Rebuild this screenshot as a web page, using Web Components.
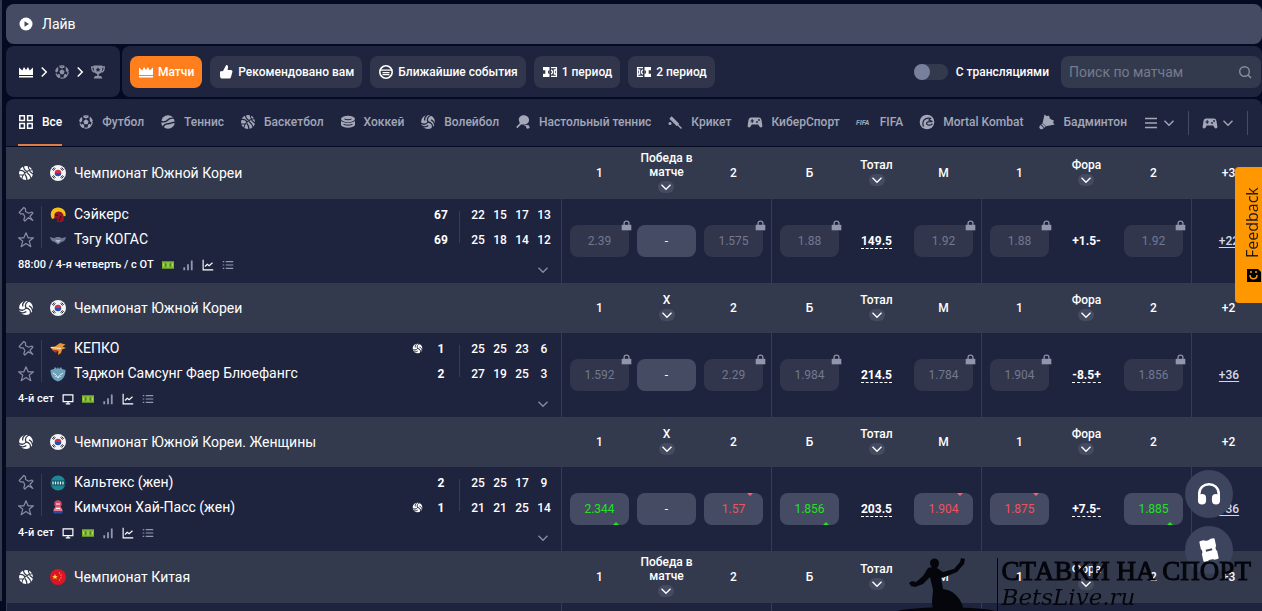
<!DOCTYPE html>
<html lang="ru">
<head>
<meta charset="utf-8">
<meta name="viewport" content="width=device-width, initial-scale=1">
<title>Лайв</title>
<style>
  :root {
    --bg: #040a22;
    --panel: #1f243e;
    --head: #343a4d;
    --raised: #444b63;
    --chip: #31364c;
    --muted: #a3a7b8;
    --dim: #737890;
    --line: #363b54;
    --orange: #ff7f1e;
    --green: #22e01f;
    --red: #f0525f;
  }
  body {
    margin: 0;
    background: var(--bg);
    color: #fff;
    font: 400 12px/16px Roboto, "Liberation Sans", sans-serif;
  }
</style>
</head>
<body>
<live-page>
  <page-title slot="top" icon="play">Лайв</page-title>
  <filter-bar slot="top">
    <filter-chip icon="crown" active>Матчи</filter-chip>
    <filter-chip icon="thumb">Рекомендовано вам</filter-chip>
    <filter-chip icon="events">Ближайшие события</filter-chip>
    <filter-chip icon="half1">1 период</filter-chip>
    <filter-chip icon="half2">2 период</filter-chip>
  </filter-bar>
  <sports-nav slot="top">
    <sport-tab icon="grid" active>Все</sport-tab>
    <sport-tab icon="football">Футбол</sport-tab>
    <sport-tab icon="tennis">Теннис</sport-tab>
    <sport-tab icon="basketball">Баскетбол</sport-tab>
    <sport-tab icon="hockey">Хоккей</sport-tab>
    <sport-tab icon="volleyball">Волейбол</sport-tab>
    <sport-tab icon="tabletennis">Настольный теннис</sport-tab>
    <sport-tab icon="cricket">Крикет</sport-tab>
    <sport-tab icon="gamepad">КиберСпорт</sport-tab>
    <sport-tab icon="fifa">FIFA</sport-tab>
    <sport-tab icon="dragon">Mortal Kombat</sport-tab>
    <sport-tab icon="shuttle">Бадминтон</sport-tab>
  </sports-nav>
  <live-board></live-board>
  <round-button slot="float" icon="headset" label="Поддержка"></round-button>
  <round-button slot="float" icon="ticket" label="Купон"></round-button>
</live-page>
<feedback-tab>Feedback</feedback-tab>
<site-mark><span slot="name">СТАВКИ НА СПОРТ</span>BetsLive.ru</site-mark>

<script>
const SWIRL = "M8 8C6.500 5 8 2 11.500 1M4.700 6.500C4.300 4 5.500 2 7.500 .6";

// Icon markup, all drawn on a 16x16 grid.
// --cut is the colour behind the icon, used for seams.
const ICONS = {
  play: `<circle cx="8" cy="8" r="6.500" fill="currentColor"/><path d="M6.500 5.200v5.600L11 8z" fill="var(--cut)"/>`,
  crown: `<path fill="currentColor" d="M1 3.500l3.300 3L6 3l2 3 2-3 1.700 3.500L15 3.500V11H1zM1 12h14v1.500H1z"/>`,
  chevronRight: `<path d="M5 2l6 6-6 6" fill="none" stroke="currentColor" stroke-width="2"/>`,
  chevronDown: `<path d="M2 5l6 6 6-6" fill="none" stroke="currentColor" stroke-width="1.800"/>`,
  football: `<circle cx="8" cy="8" r="6.200" fill="none" stroke="currentColor" stroke-width="1.200" stroke-dasharray="4.500 2"/><g fill="currentColor"><path d="M8 5.300l2.600 1.900-1 3H6.400l-1-3z"/><path d="M5.500 1.500L8 3l2.500-1.500v2L8 4.500l-2.500-1zM1.500 6l2-2 1 .5-.5 2.800-2 1.400zM14.500 6l-2-2-1 .5.500 2.800 2 1.400zM3 12.500l.8-2.700 2 .7.700 2.700-1.500 1zM13 12.500l-.8-2.700-2 .7-.7 2.700 1.500 1z"/></g>`,
  trophy: `<path fill="none" stroke="currentColor" stroke-width="1.300" d="M4 3H1.700c0 3 1 4.700 3 5.200M12 3h2.300c0 3-1 4.700-3 5.200"/><path fill="currentColor" d="M3.700 1.500h8.600v3.800c0 2.700-1.600 4.300-3.500 4.600V12H11l1.500 2.500h-9L5 12h2.200V9.900C5.300 9.600 3.700 8 3.700 5.300z"/><path fill="var(--cut)" d="M8 3.200l.8 1.500 1.600.2-1.200 1.200.3 1.700L8 7l-1.500.8.3-1.700-1.200-1.200 1.600-.2z"/>`,
  thumb: `<path fill="currentColor" d="M2 7.500l3-.5L8.200 1c2 0 2.300 1.500 1.400 5h3.200c1.500 0 1.900 1 1.500 2.300l-1.400 4.900c-.3.900-.9 1.300-1.700 1.300H3.500C2.500 14.500 2 13 2 11z"/>`,
  events: `<circle cx="8" cy="8" r="6.200" fill="none" stroke="currentColor" stroke-width="1.600"/><path d="M1.500 6.200h13M4.500 8.700h7M4.500 10.700h7" stroke="currentColor" stroke-width="1.300"/>`,
  half1: `<path d="M1 3h6.500v10H1z" fill="currentColor"/><path d="M9 3.700h5.400v8.600H9M14.400 6h-2v4h2M9 6c2 .5 2 3.500 0 4" fill="none" stroke="currentColor" stroke-width="1.300"/><path d="M1 6.200h2.300v3.600H1M7.500 6c-2 0-2 4 0 4z" fill="var(--cut)"/>`,
  half2: `<path d="M8.500 3H15v10H8.500z" fill="currentColor"/><path d="M7 3.700H1.600v8.600H7M1.600 6h2v4h-2M7 6c-2 .5-2 3.500 0 4" fill="none" stroke="currentColor" stroke-width="1.300"/><path d="M15 6.200h-2.300v3.600H15M8.500 6c2 0 2 4 0 4z" fill="var(--cut)"/>`,
  search: `<circle cx="7.500" cy="7.500" r="4.800" fill="none" stroke="currentColor" stroke-width="1.400"/><path d="M11 11l3 3" stroke="currentColor" stroke-width="1.600"/>`,
  grid: `<path d="M1.800 1.800h4.600v4.600H1.800zM9.600 1.800h4.600v4.600H9.600zM1.800 9.600h4.600v4.600H1.800zM9.600 9.600h4.600v4.600H9.600z" fill="none" stroke="currentColor" stroke-width="1.500"/>`,
  tennis: `<circle cx="8" cy="8" r="6.800" fill="currentColor"/><path d="M1 7.500c4 1 5.500.2 6.800-1.500S11 3.500 15.500 4.500M3 14c.5-2.700 2-4 5-4.200 3.500-.2 4-1.600 7-1.600" fill="none" stroke="var(--cut)" stroke-width="1.400"/>`,
  basketball: `<circle cx="8" cy="8" r="7" fill="currentColor"/><path d="M3.500 14.500C4.500 9 9 5 15 4.500M1 5.500c3-.5 5 .5 6 2.500M5.500 1c0 2.500 1 4.500 4 5.500M10.500 1c-.5 1.500 0 3 1.500 4.500M1 10h5M9 7.500c2 1.500 3.500 3.500 4 6M7 9.500c1.300 1.500 2 3.500 2 6M11.500 6.200L15 9" fill="none" stroke="var(--cut)" stroke-width="1.200"/>`,
  hockey: `<ellipse cx="8" cy="5" rx="7" ry="3.300" fill="currentColor"/><path fill="currentColor" d="M1 7c2.500 2.400 11.500 2.400 14 0v4.300c-2 3.200-12 3.200-14 0z"/><path d="M4.500 5c1.500 1 5.500 1 7 0M3.500 10.300c3 1.200 6 1.200 9 0" fill="none" stroke="var(--cut)"/>`,
  volleyball: `<circle cx="8" cy="8" r="7" fill="currentColor"/><g fill="none" stroke="var(--cut)" stroke-width="1.300"><path d="${SWIRL}"/><path d="${SWIRL}" transform="rotate(120 8 8)"/><path d="${SWIRL}" transform="rotate(240 8 8)"/></g>`,
  tabletennis: `<path fill="currentColor" d="M4.200 7.500C2.700 3.500 6 1 9.200 1.300c3.500.3 5.600 3.200 4.700 6-.5 1.500-1.500 2.500-3.300 3.200L6 10.600 2.400 14.300 1.200 13l3.600-3.700zM8.500 11l5 .3 1.300 3z"/><circle cx="12.700" cy="13" r="1.700" fill="currentColor"/>`,
  cricket: `<path d="M3.500 3.500l7.500 7.500" stroke="currentColor" stroke-width="3.200"/><path d="M10.500 10.500L14.500 14.500" stroke="currentColor" stroke-width="1.500"/><circle cx="3" cy="9.500" r="1.500" fill="currentColor"/>`,
  gamepad: `<path fill="currentColor" d="M4 3.500h8c1.500 0 2.200 1 2.600 3l.8 5.500c0 1.500-2 2-3 .5l-1.200-2H4.800l-1.200 2c-1 1.500-3 1-3-.5l.8-5.500c.4-2 1.100-3 2.600-3z"/><path d="M3.500 7h3.400M5.200 5.300v3.400" stroke="var(--cut)" stroke-width="1.200"/><circle cx="10" cy="8" r=".9" fill="var(--cut)"/><circle cx="12" cy="6" r=".9" fill="var(--cut)"/>`,
  fifa: `<text x="0" y="11" font-family="Roboto" font-size="7" font-weight="700" font-style="italic" fill="currentColor">FIFA</text>`,
  dragon: `<circle cx="8" cy="8" r="7.300" fill="currentColor"/><path d="M4.500 12.500C2.500 7 6 3 11.500 4.300L10 6l3.500 1.500-4 .3C7 8 7 10.500 9 11s3.500 0 4.500-1.300" fill="none" stroke="var(--cut)" stroke-width="1.200"/>`,
  shuttle: `<path fill="currentColor" d="M5.500.5L7.500 2 10 1.800l1 3 4 2-1 2 1.700 1.700L7 12.300 3.600 9z"/><path d="M2.800 9.800l3.300 3.300" stroke="currentColor" stroke-width="1.500"/><path fill="currentColor" d="M1.700 11l3 3c-1 1.500-2.500 1.700-3.700.7s-.7-2.700.7-3.700z"/>`,
  menu: `<path d="M2 3.500h12M2 8h12M2 12.500h12" stroke="currentColor" stroke-width="1.500"/>`,
  pin: `<path d="M1.200 6.500L5.800 1.500l1.700 1.300v2.700l3.200 1.700 3-1.200 1.200 1-3 3.500 3 4-4.500-2.800L6.800 15l-1-1.200 1-3-1.500-3H2.500z" fill="none" stroke="currentColor" stroke-width="1.200" stroke-linejoin="round"/>`,
  star: `<path d="M8 .8l2.100 5h5.400l-4.300 3.400 1.600 5.500L8 11.500l-4.800 3.200 1.600-5.500L.5 5.800h5.400z" fill="none" stroke="currentColor" stroke-width="1.200" stroke-linejoin="round"/>`,
  lock: `<path d="M4.500 8V4.500c0-4 7-4 7 0V8" fill="none" stroke="currentColor" stroke-width="1.800"/><path d="M1 7h14v8H1z" fill="currentColor"/>`,
  tv: `<path d="M1.500 2.500h13v9h-13zM5 14.500h6M8 12v2" fill="none" stroke="currentColor" stroke-width="1.600"/>`,
  pitch: `<path d="M0 3h16v10H0z" fill="#7cb52c"/><path d="M5 6v4M11 6v4" stroke="#3f6b1c" stroke-width="1.300"/><path d="M8 5v6M2 6v4M14 6v4" stroke="#b4dc6a" stroke-width="1.300"/>`,
  bars: `<path d="M3 15v-4M8 15V7M13 15V2" stroke="currentColor" stroke-width="2.400"/>`,
  chart: `<path d="M1.500 1v13.500H15M4 10l3-3 2.500 2L14 5" fill="none" stroke="currentColor" stroke-width="1.500"/>`,
  list: `<path d="M5 3.500h10M5 8h10M5 12.500h10M1 3.500h2M1 8h2M1 12.500h2" stroke="currentColor" stroke-width="1.600"/>`,
  headset: `<path d="M2 10.500V8c0-8 12-8 12 0v2.500" fill="none" stroke="currentColor" stroke-width="1.500"/><rect x="1.200" y="8" width="5" height="6.500" rx="2.500" fill="currentColor"/><rect x="9.800" y="8" width="5" height="6.500" rx="2.500" fill="currentColor"/>`,
  ticket: `<g transform="rotate(-12 8 8)"><path fill="currentColor" d="M4 1.500h2c.6.800 3.400.8 4 0h2c.5 0 .8.300.8.800v4.200c-.8.500-.8 2.500 0 3v4.200c0 .5-.3.800-.8.800h-2c-.6-.8-3.400-.8-4 0H4c-.5 0-.8-.3-.8-.8V9.500c.8-.5.8-2.500 0-3V2.300c0-.5.3-.8.8-.8z"/><path d="M6 8h4" stroke="var(--cut)" stroke-width="1.200"/></g>`,
  korea: `<circle cx="8" cy="8" r="8" fill="#f4f5f8"/><path d="M4.700 8a3.300 3.300 0 0 1 6.600 0z" fill="#d8304a"/><path d="M4.700 8a3.300 3.300 0 0 0 6.600 0z" fill="#2450a8"/><path d="M2.300 5l2-2.500M3.400 5.700l2-2.500M11.700 2.500l2 2.500M10.600 3.200l2 2.500M2.300 11l2 2.500M3.400 10.300l2 2.500M13.700 11l-2 2.500M12.600 10.300l-2 2.500" stroke="#333"/>`,
  china: `<circle cx="8" cy="8" r="8" fill="#dd1524"/><path d="M5 5l.8 2h2L6.200 8.300l.6 2L5 9.100l-1.800 1.200.6-2L2.200 7h2z" fill="#ffd83a"/><g fill="#f4a92c"><circle cx="9.500" cy="4" r=".7"/><circle cx="11" cy="6" r=".7"/><circle cx="11" cy="8.700" r=".7"/><circle cx="9.500" cy="11" r=".7"/></g>`,
  sakers: `<path d="M2 12C-1.500 5 3 .5 8 .5c5 0 8.500 4 7.500 8.500l-3 .5L5 11z" fill="#f5c019"/><path d="M4.500 7C6 3.500 12 3.500 13.500 8l.5 5-2 2H7l.3-4-3 .7z" fill="#961425"/><path d="M5 8l3 .4M9 14l2-5" stroke="#3c0810"/>`,
  kogas: `<path d="M0 5l4.500 1.300C5.500 4.500 10.500 4.500 11.500 6.300L16 5c-.5 3-2 4.500-4.500 5L8 12.500 4.500 10C2 9.500.5 8 0 5z" fill="#6d7896"/><path d="M5 8h6l-3 3z" fill="#aab4cc"/>`,
  kepco: `<path d="M0 6l5-.5L10 2l5.500 1.500-3 2L16 7l-4 1.500L11 12l-3 2 .5-4L4 10.500z" fill="#e99634"/><path d="M2 9h6l-2 3z" fill="#b63a22"/><path d="M1 6.500l10 1" stroke="#fff1c7" stroke-width="1.200"/>`,
  bluefangs: `<path d="M.5 4L4 3l1-2 2 2 1-2 1 2 2-2 1 2 3.500 1c0 6-2.500 10-7.500 11.500C3 14 .5 10 .5 4z" fill="#6fa2ba"/><path d="M3 7l3 2M13 7l-3 2M5.500 11l1-1.500L8 12l1.500-2.500 1 1.500" stroke="#dff3fa" fill="none"/>`,
  caltex: `<circle cx="8" cy="8" r="7.500" fill="#1d8793"/><path d="M1 5.500h14v5H1z" fill="#0c4d60"/><path d="M3 6.500v3M5.500 6.500v3M8 6.500v3M10.500 6.500v3M13 6.500v3" stroke="#d9f4f2" stroke-width="1.300"/>`,
  hipass: `<circle cx="8" cy="4" r="3.700" fill="#d84666"/><path d="M3.500 11.500c0-3.500 2-5 4.500-5s4.500 1.500 4.500 5z" fill="#f07c94"/><path d="M3 11h10l-1 2.500H4z" fill="#274fa5"/><path d="M6 4h4M6 8.500h4" stroke="#fff"/>`
};

/** Square inline icon, picked by the "name" attribute. */
class AppIcon extends HTMLElement {
  connectedCallback() {
    if (this.shadowRoot) return;
    this.attachShadow({ mode: "open" }).innerHTML = `
      <style>
        :host { display: block; flex: none; width: var(--size, 16px); height: var(--size, 16px); }
        svg { display: block; width: 100%; height: 100%; overflow: visible; }
      </style>
      <svg viewBox="0 0 16 16" aria-hidden="true">${ICONS[this.getAttribute("name")] || ""}</svg>`;
  }
}
customElements.define("app-icon", AppIcon);

/** Page frame: a thin side rail, the top bars, the board and floating buttons. */
class LivePage extends HTMLElement {
  connectedCallback() {
    this.attachShadow({ mode: "open" }).innerHTML = `
      <style>
        :host { display: flex; gap: 4px; min-height: 100vh; }
        aside { width: 2px; margin-bottom: 10px; background: var(--head); }
        main { flex: 1; min-width: 0; padding-top: 4px; display: flex; flex-direction: column; }
        .top { display: flex; flex-direction: column; gap: 2px; margin-bottom: 1px; }
        .float { position: fixed; right: 29px; bottom: 37px; display: grid; gap: 8px; }
      </style>
      <aside></aside>
      <main>
        <div class="top"><slot name="top"></slot></div>
        <slot></slot>
      </main>
      <div class="float"><slot name="float"></slot></div>`;
  }
}
customElements.define("live-page", LivePage);

class PageTitle extends HTMLElement {
  connectedCallback() {
    this.attachShadow({ mode: "open" }).innerHTML = `
      <style>
        :host { display: flex; align-items: center; gap: 8px; height: 40px; padding: 0 12px; border-radius: 8px; background: var(--raised); --cut: var(--raised); }
        h1 { margin: 0; font: 400 14px/20px Roboto, sans-serif; }
      </style>
      <app-icon name="${this.getAttribute("icon")}"></app-icon>
      <h1><slot></slot></h1>`;
  }
}
customElements.define("page-title", PageTitle);

class FilterBar extends HTMLElement {
  connectedCallback() {
    this.attachShadow({ mode: "open" }).innerHTML = `
      <style>
        :host { display: flex; gap: 2px; height: 51px; }
        nav, .bar { display: flex; align-items: center; border-radius: 8px; background: var(--panel); --cut: var(--panel); }
        nav { gap: 4px; padding: 0 14px 0 12px; }
        nav button { padding: 0; border: 0; background: none; color: #8d91a5; }
        nav button:first-child { color: #fff; }
        nav > app-icon { --size: 12px; }
        .bar { flex: 1; gap: 8px; padding: 0 1px 0 8px; }
        label.switch { display: flex; align-items: center; gap: 8px; margin: 0 4px 0 auto; font-weight: 500; }
        .switch input { appearance: none; width: 34px; height: 16px; margin: 0; border-radius: 8px; background: var(--head); }
        .switch input::before { content: ""; display: block; width: 16px; height: 16px; border-radius: 50%; background: #77809c; }
        .search { display: flex; align-items: center; width: 200px; height: 32px; box-sizing: border-box; padding: 0 8px; border-radius: 8px; background: var(--head); color: #868ba0; }
        .search input { flex: 1; min-width: 0; padding: 0; border: 0; outline: 0; background: none; color: #fff; font: 400 14px/20px Roboto, sans-serif; }
        .search input::placeholder { color: #767b90; opacity: 1; }
      </style>
      <nav aria-label="Навигация">
        <button type="button" aria-label="Матчи"><app-icon name="crown"></app-icon></button>
        <app-icon name="chevronRight"></app-icon>
        <button type="button" aria-label="Спорт"><app-icon name="football"></app-icon></button>
        <app-icon name="chevronRight"></app-icon>
        <button type="button" aria-label="Турниры"><app-icon name="trophy"></app-icon></button>
      </nav>
      <div class="bar">
        <slot></slot>
        <label class="switch"><input type="checkbox"> С трансляциями</label>
        <div class="search">
          <input type="text" placeholder="Поиск по матчам" aria-label="Поиск по матчам">
          <app-icon name="search"></app-icon>
        </div>
      </div>`;
  }
}
customElements.define("filter-bar", FilterBar);

class FilterChip extends HTMLElement {
  connectedCallback() {
    this.attachShadow({ mode: "open" }).innerHTML = `
      <style>
        :host { display: block; --fill: var(--chip); --cut: var(--chip); }
        :host([active]) { --fill: var(--orange); --cut: var(--orange); }
        button { display: flex; align-items: center; gap: 4px; height: 32px; padding: 0 8px; border: 0; border-radius: 8px; background: var(--fill); color: #fff; font: 500 12px/16px Roboto, sans-serif; white-space: nowrap; }
      </style>
      <button type="button"><app-icon name="${this.getAttribute("icon")}"></app-icon><slot></slot></button>`;
  }
}
customElements.define("filter-chip", FilterChip);

class SportsNav extends HTMLElement {
  connectedCallback() {
    this.attachShadow({ mode: "open" }).innerHTML = `
      <style>
        :host { display: block; }
        nav { display: flex; align-items: center; gap: 16px; height: 47px; padding: 0 0 0 12px; border-radius: 8px 8px 0 0; background: var(--panel); color: var(--muted); --cut: var(--panel); }
        .extra { display: flex; align-items: center; gap: 13px; flex: none; }
        button { display: flex; align-items: center; gap: 4px; padding: 0; border: 0; background: none; color: inherit; }
        button app-icon:last-child { --size: 12px; }
        i { width: 1px; height: 24px; background: #464b64; }
      </style>
      <nav aria-label="Виды спорта">
        <slot></slot>
        <div class="extra">
          <button type="button" aria-label="Ещё"><app-icon name="menu"></app-icon><app-icon name="chevronDown"></app-icon></button>
          <i></i>
          <button type="button" aria-label="Киберспорт"><app-icon name="gamepad"></app-icon><app-icon name="chevronDown"></app-icon></button>
          <i></i>
        </div>
      </nav>`;
  }
}
customElements.define("sports-nav", SportsNav);

class SportTab extends HTMLElement {
  connectedCallback() {
    this.attachShadow({ mode: "open" }).innerHTML = `
      <style>
        :host { display: block; align-self: stretch; }
        a { display: flex; align-items: center; gap: 8px; height: 100%; box-sizing: border-box; padding-bottom: 1px; border: solid transparent; border-width: 2px 0; color: inherit; font-weight: 500; text-decoration: none; white-space: nowrap; }
        :host([active]) a { color: #fff; border-bottom-color: #e07c46; }
      </style>
      <a href="#${this.getAttribute("icon")}"><app-icon name="${this.getAttribute("icon")}"></app-icon><slot></slot></a>`;
  }
}
customElements.define("sport-tab", SportTab);

// Column tracks shared by league headers and match rows
const GRID_CSS = `
  :host { display: grid; grid-template-columns: minmax(0, 1fr) repeat(3, 210px) 71px; }
  .group { display: grid; grid-template-columns: repeat(3, 1fr); gap: 8px; align-items: center; justify-items: center; padding: 0 8px; border-left: 1px solid transparent; text-align: center; }
  button { padding: 0; border: 0; background: none; color: inherit; font: inherit; }
`;

class LeagueHeader extends HTMLElement {
  connectedCallback() {
    const a = (name) => this.getAttribute(name) || "";
    const group = (left, middle, right) => `
      <div class="group">
        <span>${left}</span>
        <button type="button" class="market">${middle}<em><app-icon name="chevronDown"></app-icon></em></button>
        <span>${right}</span>
      </div>`;
    this.attachShadow({ mode: "open" }).innerHTML = `
      <style>
        ${GRID_CSS}
        :host { min-height: 50px; box-sizing: border-box; padding: 4px 0; align-items: center; background: var(--head); font-weight: 500; --cut: var(--head); }
        .name { display: flex; align-items: center; padding-left: 12px; }
        h2 { margin: 0 0 0 8px; font: 400 14px/20px Roboto, sans-serif; }
        .name app-icon:first-child { margin-right: 16px; }
        .market { display: grid; justify-items: center; line-height: 14px; }
        em { display: grid; place-items: center; width: 16px; height: 12px; margin: 2px 0; border-radius: 6px; background: #454b60; --size: 12px; }
        .count { padding-left: 4px; text-align: center; }
      </style>
      <div class="name">
        <app-icon name="${a("sport")}"></app-icon>
        <app-icon name="${a("flag")}"></app-icon>
        <h2><slot></slot></h2>
      </div>
      ${group("1", a("market"), "2")}
      ${group("Б", "Тотал", "М")}
      ${group("1", "Фора", "2")}
      <span class="count">${a("count")}</span>`;
  }
}
customElements.define("league-header", LeagueHeader);

/** One price; state is "locked", "up", "down" or empty. */
class OddsButton extends HTMLElement {
  connectedCallback() {
    const locked = this.getAttribute("state") === "locked";
    this.attachShadow({ mode: "open" }).innerHTML = `
      <style>
        :host { display: block; position: relative; width: 100%; }
        button { display: block; width: 100%; height: 32px; padding: 0; border: 0; border-radius: 8px; background: var(--raised); color: #fff; font: 400 12px/16px Roboto, sans-serif; }
        :host([state="locked"]) button { background: var(--chip); color: var(--dim); }
        :host([state="up"]) button { color: var(--green); }
        :host([state="down"]) button { color: var(--red); }
        :host([state="up"])::after, :host([state="down"])::after { content: ""; position: absolute; right: 10px; border: solid transparent; border-width: 0 3px; }
        :host([state="up"])::after { bottom: 0; border-bottom: 3px solid var(--green); }
        :host([state="down"])::after { top: 0; border-top: 3px solid #ff5c78; }
        app-icon { --size: 11px; position: absolute; top: -5px; right: -3px; color: #9296ac; }
      </style>
      <button type="button" ${locked ? "disabled" : ""}><slot></slot></button>
      ${locked ? `<app-icon name="lock"></app-icon>` : ""}`;
  }
}
customElements.define("odds-button", OddsButton);

class MatchRow extends HTMLElement {
  connectedCallback() {
    this.attachShadow({ mode: "open" });
    this.render();
  }

  renderOdds([value, state = ""]) {
    return `<odds-button state="${state}">${value}</odds-button>`;
  }

  renderScore(team) {
    return `
      <tr>
        <td class="serve">${team.serve ? `<app-icon name="volleyball"></app-icon>` : ""}</td>
        <th>${team.total}</th>
        ${team.periods.map((p) => `<td>${p}</td>`).join("")}
      </tr>`;
  }

  render() {
    const m = this.match;
    this.shadowRoot.innerHTML = `
      <style>
        ${GRID_CSS}
        :host { height: 84px; background: var(--panel); --cut: var(--panel); }
        .group { border-left-color: var(--line); }
        .info { display: grid; grid-template: 50px 26px / auto minmax(0, 1fr) auto; padding: 3px 6px 5px 12px; }
        .marks { display: grid; align-content: space-between; width: 23px; height: 42px; margin: 4px 8px 0 0; border-right: 1px solid var(--line); color: #868ba3; }
        .team { display: flex; align-items: center; gap: 8px; font-size: 14px; line-height: 25px; white-space: nowrap; }
        table { align-self: center; border-collapse: collapse; font-weight: 500; text-align: center; background: linear-gradient(var(--line), var(--line)) 58px center / 1px 32px no-repeat; }
        td, th { width: 22px; height: 25px; padding: 0; box-sizing: border-box; }
        th { width: 36px; font-weight: 700; }
        th + td { width: 30px; padding-left: 8px; }
        .serve app-icon { --size: 11px; margin-left: auto; }
        .status { grid-column: 1 / 3; display: flex; align-items: center; gap: 8px; font-size: 11px; font-weight: 500; white-space: nowrap; --size: 12px; }
        .soft { color: #9297ae; }
        .more { justify-self: end; align-self: end; width: 12px; margin: 0 6px 2px 0; color: #868ba3; --size: 12px; }
        .line { border-bottom: 1px dashed #fff; line-height: 14px; font-weight: 700; }
        .plain { border-bottom-color: transparent; }
        .all { display: grid; place-items: center; padding-left: 4px; border-left: 1px solid var(--line); }
        a { color: #d5d8e4; font-weight: 500; text-underline-offset: 2px; }
      </style>
      <div class="info">
        <div class="marks">
          <button type="button" aria-label="Закрепить"><app-icon name="pin"></app-icon></button>
          <button type="button" aria-label="В избранное"><app-icon name="star"></app-icon></button>
        </div>
        <div>
          ${m.teams.map((t) => `<div class="team"><app-icon name="${t.logo}"></app-icon>${t.name}</div>`).join("")}
        </div>
        <table>${m.teams.map((t) => this.renderScore(t)).join("")}</table>
        <div class="status">
          <span>${m.status}</span>
          ${m.tv ? `<app-icon name="tv"></app-icon>` : ""}
          <app-icon name="pitch"></app-icon>
          <app-icon name="bars" class="soft"></app-icon>
          <app-icon name="chart"></app-icon>
          <app-icon name="list" class="soft"></app-icon>
        </div>
        <button type="button" class="more" aria-label="Развернуть"><app-icon name="chevronDown"></app-icon></button>
      </div>
      <div class="group">${m.win.map(this.renderOdds).join("")}</div>
      <div class="group">
        ${this.renderOdds(m.over)}<button type="button" class="line">${m.total}</button>${this.renderOdds(m.under)}
      </div>
      <div class="group">
        ${this.renderOdds(m.home)}<button type="button" class="line ${m.tv ? "" : "plain"}">${m.handicap}</button>${this.renderOdds(m.away)}
      </div>
      <div class="all"><a href="#match">${m.more}</a></div>`;
  }
}
customElements.define("match-row", MatchRow);

/** Empty strip under the last header that runs to the bottom of the window. */
class RowTail extends HTMLElement {
  connectedCallback() {
    this.attachShadow({ mode: "open" }).innerHTML = `
      <style>
        ${GRID_CSS}
        :host { flex: 1; background: var(--panel); }
        i { grid-row: 1; border-left: 1px solid var(--line); }
        i:first-of-type { grid-column: 2; }
      </style>
      <i></i><i></i><i></i><i></i>`;
  }
}
customElements.define("row-tail", RowTail);

const LEAGUES = [
  {
    title: "Чемпионат Южной Кореи", sport: "basketball", flag: "korea", market: "Победа в<br>матче", count: "+3",
    match: {
      teams: [
        { name: "Сэйкерс", logo: "sakers", total: 67, periods: [22, 15, 17, 13] },
        { name: "Тэгу КОГАС", logo: "kogas", total: 69, periods: [25, 18, 14, 12] }
      ],
      status: "88:00 / 4-я четверть / с ОТ",
      win: [["2.39", "locked"], ["-"], ["1.575", "locked"]],
      over: ["1.88", "locked"], total: "149.5", under: ["1.92", "locked"],
      home: ["1.88", "locked"], handicap: "+1.5-", away: ["1.92", "locked"],
      more: "+22"
    }
  },
  {
    title: "Чемпионат Южной Кореи", sport: "volleyball", flag: "korea", market: "X", count: "+2",
    match: {
      teams: [
        { name: "КЕПКО", logo: "kepco", total: 1, periods: [25, 25, 23, 6], serve: true },
        { name: "Тэджон Самсунг Фаер Блюефангс", logo: "bluefangs", total: 2, periods: [27, 19, 25, 3] }
      ],
      status: "4-й сет", tv: true,
      win: [["1.592", "locked"], ["-"], ["2.29", "locked"]],
      over: ["1.984", "locked"], total: "214.5", under: ["1.784", "locked"],
      home: ["1.904", "locked"], handicap: "-8.5+", away: ["1.856", "locked"],
      more: "+36"
    }
  },
  {
    title: "Чемпионат Южной Кореи. Женщины", sport: "volleyball", flag: "korea", market: "X", count: "+2",
    match: {
      teams: [
        { name: "Кальтекс (жен)", logo: "caltex", total: 2, periods: [25, 25, 17, 9] },
        { name: "Кимчхон Хай-Пасс (жен)", logo: "hipass", total: 1, periods: [21, 21, 25, 14], serve: true }
      ],
      status: "4-й сет", tv: true,
      win: [["2.344", "up"], ["-"], ["1.57", "down"]],
      over: ["1.856", "up"], total: "203.5", under: ["1.904", "down"],
      home: ["1.875", "down"], handicap: "+7.5-", away: ["1.885", "up"],
      more: "+36"
    }
  },
  { title: "Чемпионат Китая", sport: "basketball", flag: "china", market: "Победа в<br>матче", count: "+3" }
];

class LiveBoard extends HTMLElement {
  connectedCallback() {
    const root = this.attachShadow({ mode: "open" });
    root.innerHTML = `<style>:host { flex: 1; display: flex; flex-direction: column; }</style>`;
    LEAGUES.forEach((league) => {
      const header = document.createElement("league-header");
      ["sport", "flag", "market", "count"].forEach((key) => header.setAttribute(key, league[key]));
      header.textContent = league.title;
      root.append(header);
      if (league.match) {
        const row = document.createElement("match-row");
        row.match = league.match;
        root.append(row);
      }
    });
    root.append(document.createElement("row-tail"));
  }
}
customElements.define("live-board", LiveBoard);

class RoundButton extends HTMLElement {
  connectedCallback() {
    this.attachShadow({ mode: "open" }).innerHTML = `
      <style>
        :host { display: block; --size: 26px; --cut: #3d445e; }
        button { display: grid; place-items: center; width: 48px; height: 48px; padding: 0; border: 0; border-radius: 50%; background: #3d445e; color: #fff; }
      </style>
      <button type="button" aria-label="${this.getAttribute("label")}"><app-icon name="${this.getAttribute("icon")}"></app-icon></button>`;
  }
}
customElements.define("round-button", RoundButton);

class FeedbackTab extends HTMLElement {
  connectedCallback() {
    this.attachShadow({ mode: "open" }).innerHTML = `
      <style>
        :host { position: fixed; top: 167px; right: 0; }
        button { display: flex; align-items: center; gap: 10px; width: 27px; height: 136px; padding: 20px 7px 20px 0; box-sizing: border-box; border: 0; border-radius: 0 4px 4px 0; background: #ff9800; color: #1c1a1a; font: 400 16px/20px "Open Sans", sans-serif; writing-mode: vertical-rl; transform: rotate(180deg); }
        svg { width: 15px; height: 15px; flex: none; margin-right: 4px; }
      </style>
      <button type="button">
        <svg viewBox="0 0 15 15" aria-hidden="true"><path d="M0 1h14v13H3L0 11z"/><path d="M4 8c0-5 7-5 7 0M5 10v2M10 10v2" fill="none" stroke="#ff9800" stroke-width="1.500"/></svg>
        <slot></slot>
      </button>`;
  }
}
customElements.define("feedback-tab", FeedbackTab);

/** Site signature laid over the bottom right corner. */
class SiteMark extends HTMLElement {
  connectedCallback() {
    this.attachShadow({ mode: "open" }).innerHTML = `
      <style>
        :host { position: fixed; right: 11px; bottom: 0; display: flex; color: #05060c; pointer-events: none; }
        svg { width: 102px; height: 53px; }
        div { padding-left: 3px; border-left: 1px solid #05060c; white-space: nowrap; }
        strong { display: block; font: 400 27px/26px "Liberation Serif", serif; -webkit-text-stroke: 1px #05060c; }
        em { display: block; font: italic 400 23px/27px "DejaVu Serif", serif; }
      </style>
      <svg viewBox="0 0 102 53" aria-hidden="true"><path fill="#05060c" d="M2 53c22-5 78-5 98 0zM35 5c0-6 9-6 9 0 0 2-1 4-2 5l6 4 11-3 6-7 1-4 4 1-1 5-7 8-12 5-4 1 2 11c10 1 17 8 20 18l2 3H38l-1-8 1-12-3-13-7 7-8 3-4-1-2-3 3-2 4 1 7-6 5-8 4-1c-1-1-2-2-2-4z"/></svg>
      <div><strong><slot name="name"></slot></strong><em><slot></slot></em></div>`;
  }
}
customElements.define("site-mark", SiteMark);
</script>
</body>
</html>
